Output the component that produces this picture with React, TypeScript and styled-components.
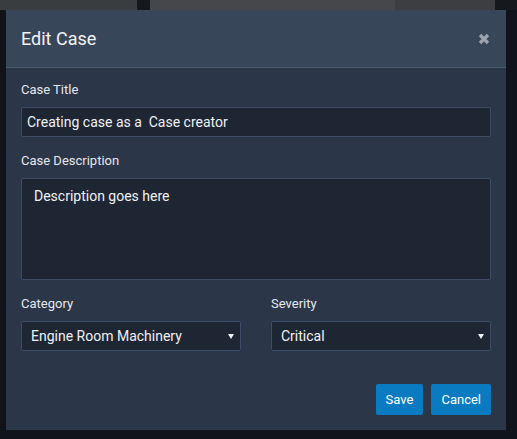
import React, { useState } from 'react';
import styled, { createGlobalStyle } from 'styled-components';

const GlobalStyle = createGlobalStyle`
  html, body {
    margin: 0;
    padding: 0;
    background: #10141a;
    font-family: Roboto, 'Liberation Sans', Arial, sans-serif;
  }
  * {
    box-sizing: border-box;
  }
`;

const categories = ['Engine Room Machinery', 'Deck Machinery', 'Navigation', 'Electrical'];
const severities = ['Critical', 'High', 'Medium', 'Low'];

const App = () => {
  const [title, setTitle] = useState('Creating case as a  Case creator');
  const [description, setDescription] = useState('Description goes here');
  const [category, setCategory] = useState(categories[0]);
  const [severity, setSeverity] = useState(severities[0]);

  return (
    <>
      <GlobalStyle />
      <Page>
        <TileRow>
          <Tile $tone="#3a3d40" />
          <Tile $tone="#15181d" />
          <Tile $tone="#45474a" />
          <Tile $tone="#3c3e41" />
          <Tile $tone="#15181d" />
        </TileRow>
      </Page>

      <Overlay>
        <Modal>
          <Header>
            <Title>Edit Case</Title>
            <CloseButton aria-label="Close">
              <svg width="12" height="12" viewBox="0 0 12 12">
                <path
                  d="M2 2 L10 10 M10 2 L2 10"
                  stroke="#9ba4b0"
                  strokeWidth="3.2"
                  strokeLinecap="butt"
                />
              </svg>
            </CloseButton>
          </Header>

          <Body>
            <Field>
              <Label>Case Title</Label>
              <TextInput value={title} onChange={(e) => setTitle(e.target.value)} />
            </Field>

            <Field>
              <Label>Case Description</Label>
              <TextArea
                value={description}
                onChange={(e) => setDescription(e.target.value)}
              />
            </Field>

            <Row>
              <Field>
                <Label>Category</Label>
                <SelectWrap>
                  <Select value={category} onChange={(e) => setCategory(e.target.value)}>
                    {categories.map((c) => (
                      <option key={c}>{c}</option>
                    ))}
                  </Select>
                  <Caret />
                </SelectWrap>
              </Field>
              <Field>
                <Label>Severity</Label>
                <SelectWrap>
                  <Select value={severity} onChange={(e) => setSeverity(e.target.value)}>
                    {severities.map((s) => (
                      <option key={s}>{s}</option>
                    ))}
                  </Select>
                  <Caret />
                </SelectWrap>
              </Field>
            </Row>
          </Body>

          <Footer>
            <Button>Save</Button>
            <Button>Cancel</Button>
          </Footer>
        </Modal>
      </Overlay>
    </>
  );
};

/* ----- STYLES ----- */

const Page = styled.div`
  width: 100vw;
  height: 100vh;
  background: #10141a;
  overflow: hidden;
`;

const TileRow = styled.div`
  display: grid;
  grid-template-columns: 137px 13px 245px 100px 1fr;
  height: 10px;
`;

const Tile = styled.div<{ $tone: string }>`
  background: ${(p) => p.$tone};
`;

const Overlay = styled.div`
  /* modal sits on top of the page */
  position: fixed;
  inset: 0;
  padding: 10px 0 0 6px;
`;

const Modal = styled.div`
  width: 500px;
  height: 420px;
  display: flex;
  flex-direction: column;
  background: #2b3648;
`;

const Header = styled.div`
  display: flex;
  align-items: center;
  justify-content: space-between;
  padding: 18px 15px 18px 15px;
  background: #38465a;
  border-bottom: 1px solid #4b5a70;
`;

const Title = styled.h2`
  margin: 0;
  font-size: 18px;
  line-height: 21px;
  font-weight: 400;
  color: #f2f4f7;
`;

const CloseButton = styled.button`
  display: flex;
  padding: 0;
  margin-right: 1px;
  border: none;
  background: none;
  cursor: pointer;
`;

const Body = styled.div`
  display: flex;
  flex-direction: column;
  gap: 15px;
  padding: 13px 15px 0;
`;

const Field = styled.div`
  display: flex;
  flex-direction: column;
  gap: 8px;
  min-width: 0;
`;

const Label = styled.label`
  font-size: 13px;
  line-height: 18px;
  color: #e4e8ee;
`;

const TextInput = styled.input`
  height: 30px;
  padding: 0 5px;
  font-family: inherit;
  font-size: 14px;
  color: #eef1f5;
  background: #1e2533;
  border: 1px solid #3e4d66;
  border-radius: 2px;
  outline: none;
`;

const TextArea = styled.textarea`
  height: 102px;
  padding: 8px 12px;
  resize: none;
  font-family: inherit;
  font-size: 14px;
  line-height: 18px;
  color: #eef1f5;
  background: #1e2533;
  border: 1px solid #3e4d66;
  border-radius: 2px;
  outline: none;
`;

const Row = styled.div`
  display: grid;
  grid-template-columns: 1fr 1fr;
  gap: 30px;
`;

const SelectWrap = styled.div`
  position: relative;
`;

const Select = styled.select`
  width: 100%;
  height: 30px;
  padding: 0 20px 0 9px;
  appearance: none;
  font-family: inherit;
  font-size: 14px;
  color: #eef1f5;
  background: #1e2533;
  border: 1px solid #3e4d66;
  border-radius: 2px;
  outline: none;
`;

const Caret = styled.span`
  /* little arrow drawn over the select */
  position: absolute;
  right: 7px;
  top: 13px;
  width: 0;
  height: 0;
  border-left: 3px solid transparent;
  border-right: 3px solid transparent;
  border-top: 5px solid #f2f4f7;
  pointer-events: none;
`;

const Footer = styled.div`
  display: flex;
  justify-content: flex-end;
  gap: 8px;
  margin-top: auto;
  padding: 0 15px 15px;
`;

const Button = styled.button`
  height: 31px;
  padding: 0 10px;
  font-family: inherit;
  font-size: 13px;
  color: #ffffff;
  background: #0a7bc0;
  border: none;
  border-radius: 2px;
  cursor: pointer;

  &:hover {
    background: #0c8ad6;
  }
`;

export default App;
